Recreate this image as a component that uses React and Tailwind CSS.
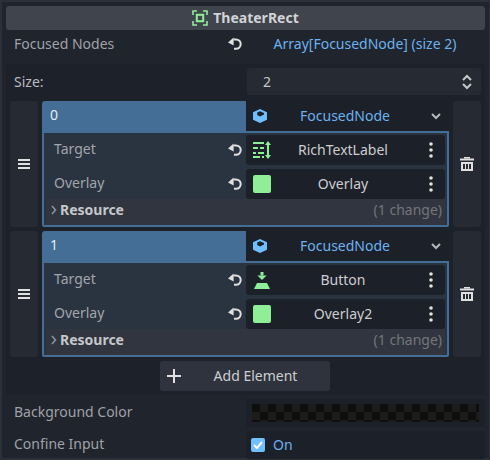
const font = { fontFamily: '"Noto Sans", sans-serif' };

const Revert = () => (
  <svg width="16" height="16" viewBox="0 0 16 16" className="shrink-0">
    <path d="M6.5 3.4H9A4.6 4.6 0 0 1 9 12.8H7" fill="none" stroke="#e0e0e0" strokeWidth="2" />
    <path d="M6.6 1.4V9.6L1 6.6z" fill="#e0e0e0" />
  </svg>
);

const Dots = () => (
  <svg width="4" height="16" viewBox="0 0 4 16" className="shrink-0">
    <circle cx="2" cy="2" r="1.8" fill="#e0e0e0" />
    <circle cx="2" cy="8" r="1.8" fill="#e0e0e0" />
    <circle cx="2" cy="14" r="1.8" fill="#e0e0e0" />
  </svg>
);

const Cube = () => (
  <svg width="14" height="14" viewBox="0 0 14 14" className="shrink-0">
    <path d="M7 0l7 3.2v7.6L7 14l-7-3.2V3.2z" fill="#70bfff" />
    <path d="M7 2.2l4 1.8v1.6L7 7.4 4.2 6V3.6z" fill="#1c2028" />
  </svg>
);

const RichText = () => (
  <svg width="18" height="18" viewBox="0 0 18 18" className="shrink-0">
    <g fill="#8eef97">
      <rect x="0" y="1" width="11" height="2" />
      <rect x="0" y="6" width="5" height="2" />
      <rect x="7" y="6" width="4" height="2" />
      <rect x="0" y="11" width="3" height="2" />
      <rect x="5" y="11" width="6" height="2" />
      <rect x="0" y="15" width="7" height="2" />
      <rect x="9" y="15" width="2" height="2" />
      <rect x="14" y="3" width="2" height="12" />
      <path d="M15 0l3 4h-6zM15 18l3-4h-6z" />
    </g>
  </svg>
);

const ButtonIcon = () => (
  <svg width="16" height="17" viewBox="0 0 16 17" className="shrink-0">
    <g fill="#8eef97">
      <rect x="6.5" y="0" width="3" height="3.5" />
      <path d="M3.4 3.5h9.2L8 8z" />
      <path d="M3 11h10l3 6H0z" />
    </g>
  </svg>
);

const Swatch = () => <div className="h-[18px] w-[18px] shrink-0 rounded-[2px] bg-[#8eef97]" />;

const Chevron = () => (
  <svg width="12" height="8" viewBox="0 0 12 8" className="shrink-0">
    <path d="M2 2l4 4 4-4" fill="none" stroke="#b5b7ba" strokeWidth="2" />
  </svg>
);

// node picker row inside an element
const SubRow = ({ label, icon, value }) => (
  <div className="flex h-[30px] items-center">
    <div className="w-[180px] pb-[2px] pl-[10px] text-[#a2a5aa]">{label}</div>
    <div className="flex w-[22px] justify-center"><Revert /></div>
    <div className="flex h-[30px] w-[199px] items-center rounded-[3px] bg-[#1c2028] pl-[7px] pr-[12px]">
      <div className="flex w-[18px] justify-center">{icon}</div>
      <div className="flex-1 pr-[14px] text-center text-[#cdced0]">{value}</div>
      <Dots />
    </div>
  </div>
);

const Element = ({ index, rows }) => (
  <div className="flex h-[126px] gap-[4px] pl-[4px] pr-[4px]">
    <div className="flex w-[28px] items-center justify-center rounded-[3px] bg-[#252a33]">
      <svg width="12" height="10" viewBox="0 0 12 10">
        <g fill="#e0e0e0">
          <rect x="0" y="0" width="12" height="2" />
          <rect x="0" y="4" width="12" height="2" />
          <rect x="0" y="8" width="12" height="2" />
        </g>
      </svg>
    </div>
    <div className="flex w-[407px] flex-col">
      <div className="flex h-[32px]">
        <div className="w-[204px] rounded-tl-[3px] bg-[#446e96] pl-[8px] pt-[4px] text-[#e6edf3]">{index}</div>
        <div className="flex h-[30px] flex-1 items-center rounded-[3px] bg-[#1c2028] pl-[7px] pr-[7px]">
          <Cube />
          <div className="flex-1 pr-[7px] text-center text-[#6cb2ef]">FocusedNode</div>
          <Chevron />
        </div>
      </div>
      <div className="-mt-[2px] flex flex-1 flex-col rounded-b-[2px] border-2 border-[#446e96] bg-[#2a3441] pt-[2px]">
        <div className="flex flex-col gap-[4px]">{rows}</div>
        <div className="mx-[2px] flex h-[26px] items-center justify-between bg-[#30353f] pb-[4px] pl-[5px] pr-[3px]">
          <div className="flex items-center gap-[3px] font-bold text-[#c5c7ca]">
            <svg width="6" height="10" viewBox="0 0 6 10" className="shrink-0">
              <path d="M1 1l3.5 4L1 9" fill="none" stroke="#8f9297" strokeWidth="1.6" />
            </svg>
            Resource
          </div>
          <div className="text-[#73767c]">(1 change)</div>
        </div>
      </div>
    </div>
    <div className="flex w-[28px] items-center justify-center rounded-[3px] bg-[#252a33]">
      <svg width="14" height="14" viewBox="0 0 14 14">
        <g fill="#e0e0e0">
          <rect x="4" y="0" width="6" height="1.5" />
          <rect x="0" y="1.5" width="14" height="2" />
          <path d="M1 5h12v9H1zM3 7v5h2V7zm3 0v5h2V7zm3 0v5h2V7z" fillRule="evenodd" />
        </g>
      </svg>
    </div>
  </div>
);

export default function App() {
  return (
    <div className="h-[460px] w-[490px] overflow-hidden bg-[#2b313b] pl-[2px] pr-[1px] pt-[2px] text-[14px] leading-[20px]" style={font}>
      <div className="h-[456px] bg-[#20242c] pl-[4px] pr-[4px] pt-[4px]">
        <div className="flex h-[24px] items-center justify-center gap-[5px] rounded-[3px] bg-[#3f444d] font-bold text-[#d2d3d5]">
          <svg width="16" height="16" viewBox="0 0 16 16" className="shrink-0">
            <path d="M1 5V1h4M11 1h4v4M15 11v4h-4M5 15H1v-4" fill="none" stroke="#8eef97" strokeWidth="1.6" />
            <rect x="4.8" y="4.8" width="6.4" height="6.4" fill="none" stroke="#8eef97" strokeWidth="2" />
          </svg>
          TheaterRect
        </div>

        <div className="mb-[6px] flex h-[28px] items-center">
          <div className="w-[221px] pl-[8px] text-[#9fa2a7]">Focused Nodes</div>
          <Revert />
          <div className="flex-1 pl-[2px] text-center text-[#6cb2ef]">Array[FocusedNode] (size 2)</div>
        </div>

        <div className="h-[331px] rounded-[3px] bg-[#1d2129]">
          <div className="flex h-[37px] items-start pl-[8px] pr-[4px] pt-[4px]">
            <div className="flex h-[27px] w-[233px] items-center text-[#b9bbbe]">Size:</div>
            <div className="flex h-[27px] flex-1 items-center justify-between rounded-[3px] bg-[#252a33] pl-[16px] pr-[8px] text-[#c5c7ca]">
              2
              <svg width="12" height="16" viewBox="0 0 12 16" className="shrink-0">
                <path d="M2 6l4-4 4 4M2 10l4 4 4-4" fill="none" stroke="#c5c7ca" strokeWidth="2" />
              </svg>
            </div>
          </div>

          <div className="flex flex-col gap-[4px]">
            <Element
              index="0"
              rows={
                <>
                  <SubRow label="Target" icon={<RichText />} value="RichTextLabel" />
                  <SubRow label="Overlay" icon={<Swatch />} value="Overlay" />
                </>
              }
            />
            <Element
              index="1"
              rows={
                <>
                  <SubRow label="Target" icon={<ButtonIcon />} value="Button" />
                  <SubRow label="Overlay" icon={<Swatch />} value="Overlay2" />
                </>
              }
            />
          </div>

          <div className="mt-[4px] flex justify-center pr-[1px]">
            <div className="flex h-[30px] w-[170px] items-center rounded-[3px] bg-[#2e333d] pl-[7px] text-[#cdced0]">
              <svg width="14" height="14" viewBox="0 0 14 14" className="shrink-0">
                <path d="M7 0v14M0 7h14" stroke="#e0e0e0" strokeWidth="2" />
              </svg>
              <div className="flex-1 text-center">Add Element</div>
            </div>
          </div>
        </div>

        <div className="mt-[4px] flex h-[28px] items-center">
          <div className="w-[240px] pb-[2px] pl-[8px] text-[#9fa2a7]">Background Color</div>
          <div className="flex h-[28px] flex-1 items-center rounded-[3px] bg-[#1c2028] px-[6px]">
            <div className="h-[18px] w-full bg-[#0e0e0e] bg-[conic-gradient(#1c1c1a_25%,#0e0e0e_0_50%,#1c1c1a_0_75%,#0e0e0e_0)] bg-[length:16px_16px]" />
          </div>
        </div>

        <div className="mt-[4px] flex h-[28px] items-center">
          <div className="w-[240px] pb-[2px] pl-[8px] text-[#9fa2a7]">Confine Input</div>
          <div className="flex h-[28px] flex-1 items-center gap-[8px] rounded-[3px] bg-[#1c2028] pl-[5px] text-[#6cb2ef]">
            <div className="flex h-[14px] w-[14px] items-center justify-center rounded-[2px] bg-[#70bfff]">
              <svg width="10" height="8" viewBox="0 0 10 8">
                <path d="M1 4l3 3 5-6" fill="none" stroke="#fff" strokeWidth="2" />
              </svg>
            </div>
            On
          </div>
        </div>
      </div>
    </div>
  );
}
